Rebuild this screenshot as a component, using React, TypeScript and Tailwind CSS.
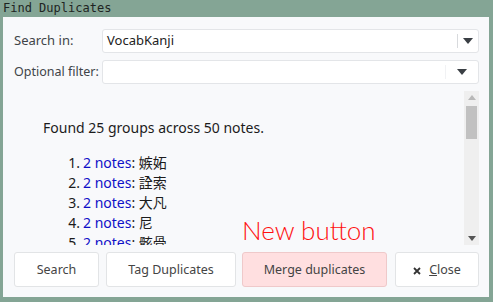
import React from 'react';

const groups = ['嫉妬', '詮索', '大凡', '尼', '骸骨'];

const Caret: React.FC<{ className?: string }> = ({ className }) => (
  <svg width="10" height="6" viewBox="0 0 10 6" className={className}>
    <path d="M0 0 L10 0 L5 6 Z" fill="#3a3f44" />
  </svg>
);

const Combo: React.FC<{ value?: string; sep: string; caretPad: string }> = ({ value, sep, caretPad }) => (
  <div className="flex-1 h-[24px] flex items-center bg-white border border-[#e3e5e8] rounded-[3px]">
    <div className="flex-1 pl-[4px] text-[13px] text-[#222]">{value}</div>
    <div className={`w-px h-[14px] ${sep}`} />
    <div className={`flex items-center justify-center ${caretPad}`}>
      <Caret />
    </div>
  </div>
);

export default function App() {
  return (
    <div className="w-[493px] h-[302px] bg-[#84a595] overflow-hidden" style={{ fontFamily: '"Noto Sans", "Noto Sans CJK JP", sans-serif' }}>
      <div className="h-[17px] pl-[3px] pt-[1px] text-[12px] leading-[15px] text-[#1e2422]" style={{ fontFamily: '"DejaVu Sans Mono", monospace' }}>
        Find Duplicates
      </div>
      <div className="relative ml-[3px] w-[486px] h-[280px] bg-[#f8f9fb] flex flex-col pl-[11px] pr-[10px] pt-[12px] pb-[10px]">
        <div className="flex items-center h-[24px]">
          <div className="w-[88px] whitespace-nowrap text-[13px] text-[#404448]">Search in:</div>
          <Combo value="VocabKanji" sep="bg-[#d8dadd]" caretPad="w-[20px]" />
        </div>
        <div className="flex items-center h-[24px] mt-[7px]">
          <div className="w-[88px] whitespace-nowrap text-[12.5px] text-[#404448]">Optional filter:</div>
          <Combo sep="bg-[#f1f2f4]" caretPad="w-[32px]" />
        </div>
        <div className="flex mt-[7px] h-[154px]">
          <div className="flex-1 overflow-hidden pl-[29px] pt-[27px] text-[14px] text-[#1c1c1c]">
            <div className="leading-[20px]">Found 25 groups across 50 notes.</div>
            <div className="mt-[15px] pl-[22px]">
              {groups.map((g, i) => (
                <div key={g} className="leading-[20px] flex">
                  <span className="w-[15px] text-right mr-[3px]">{i + 1}.</span>
                  <span className="text-[#1010c8]">2 notes</span>
                  <span>: {g}</span>
                </div>
              ))}
            </div>
          </div>
          <div className="w-[15px] bg-[#efefef] flex flex-col items-center">
            <svg width="8" height="5" viewBox="0 0 8 5" className="mt-[4px]">
              <path d="M0 5 L8 5 L4 0 Z" fill="#b8b8b8" />
            </svg>
            <div className="mt-[6px] w-[11px] h-[33px] bg-[#c1c1c1]" />
            <div className="flex-1" />
            <svg width="8" height="5" viewBox="0 0 8 5" className="mb-[4px]">
              <path d="M0 0 L8 0 L4 5 Z" fill="#555" />
            </svg>
          </div>
        </div>
        <div className="flex mt-[7px] h-[35px] text-[12.5px] text-[#444]">
          <button className="w-[85px] pt-[2px] bg-white border border-[#e2e4e6] rounded-[3px]">Search</button>
          <button className="ml-[7px] w-[130px] pt-[2px] bg-white border border-[#e2e4e6] rounded-[3px]">Tag Duplicates</button>
          <button className="ml-[6px] w-[145px] pt-[2px] bg-[#ffdfe0] border border-[#efc9ca] rounded-[3px]">Merge duplicates</button>
          <button className="ml-[8px] w-[84px] pt-[2px] bg-white border border-[#e2e4e6] rounded-[3px] flex items-center justify-center gap-[8px]">
            <svg width="8" height="8" viewBox="0 0 8 8">
              <path d="M1 1 L7 7 M7 1 L1 7" stroke="#333" strokeWidth="1.8" />
            </svg>
            <span><span className="underline">C</span>lose</span>
          </button>
        </div>
        <div className="absolute left-[239px] top-[197px] text-[26px] font-light leading-[32px] text-[#ff1010]" style={{ fontFamily: 'Lato, sans-serif' }}>
          New button
        </div>
      </div>
    </div>
  );
}
